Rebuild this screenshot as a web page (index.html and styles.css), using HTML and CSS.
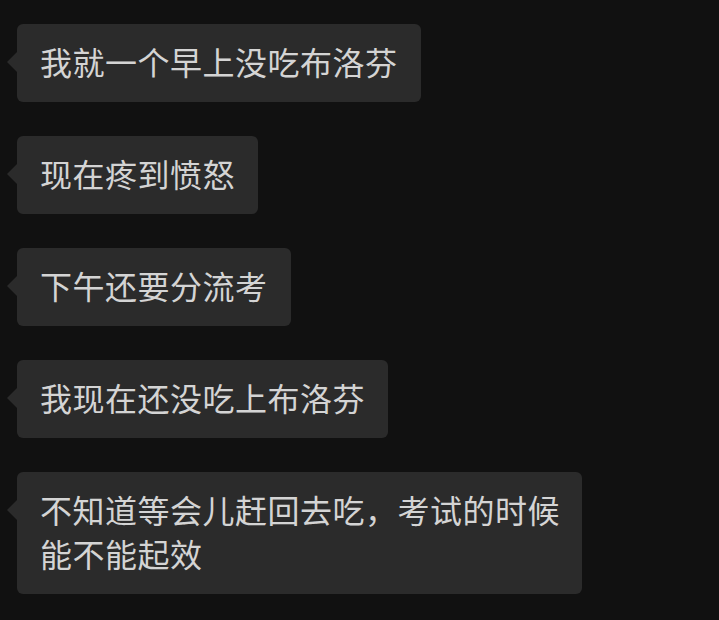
FILE: index.html
```html
<!DOCTYPE html>
<html>
	<head>
		<meta charset="utf-8" />
		<title>聊天</title>
		<link rel="stylesheet" href="styles.css">
	</head>
	<body>
		<div id="chat">
			<div class="msg"><div class="bubble">我就一个早上没吃布洛芬</div></div>
			<div class="msg"><div class="bubble">现在疼到愤怒</div></div>
			<div class="msg"><div class="bubble">下午还要分流考</div></div>
			<div class="msg"><div class="bubble">我现在还没吃上布洛芬</div></div>
			<div class="msg"><div class="bubble wide">不知道等会儿赶回去吃，考试的时候能不能起效</div></div>
		</div>
	</body>
</html>
```
FILE: styles.css
```css
*{margin:0;padding:0}
html,body{background:#111111;}
body{font-family:"Noto Sans CJK SC","Noto Sans",sans-serif;width:719px;height:620px;overflow:hidden;}
#chat{display:flex;flex-direction:column;gap:34px;padding:24px 0 0 17px;}
.msg{display:flex;}
.bubble{position:relative;background:#2b2b2b;color:#d4d4d4;font-size:32px;letter-spacing:0.5px;
	line-height:44px;padding:15px 23px 19px 23px;border-radius:6px;}
.bubble::before{content:"";position:absolute;left:-10px;top:28px;width:0;height:0;
	border-top:10px solid transparent;border-bottom:10px solid transparent;border-right:10px solid #2b2b2b;}
.wide{width:522px;padding-right:20px;}
```
